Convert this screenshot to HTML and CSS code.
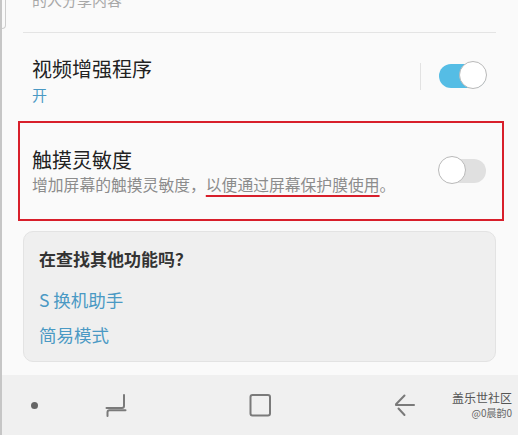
FILE: index.html
```html
<!DOCTYPE html>
<html lang="zh-CN">
<head>
    <meta charset="UTF-8">
    <meta name="viewport" content="width=device-width, initial-scale=1.0">
    <title>高级功能</title>
    <link rel="stylesheet" href="styles.css">
</head>
<body>
    <div class="screen">
        <div class="edge-tab"></div>

        <div class="content">
            <div class="top-item">
                <p class="top-text">的人分享内容</p>
            </div>

            <div class="row video-row">
                <div class="row-text">
                    <div class="row-title">视频增强程序</div>
                    <div class="row-state">开</div>
                </div>
                <div class="row-switch">
                    <span class="vdivider"></span>
                    <span class="toggle on"><span class="thumb"></span></span>
                </div>
            </div>

            <div class="row touch-row">
                <div class="row-text">
                    <div class="row-title">触摸灵敏度</div>
                    <div class="row-sub">增加屏幕的触摸灵敏度，<span class="mark">以便通过屏幕保护膜使用</span>。</div>
                </div>
                <span class="toggle off"><span class="thumb"></span></span>
            </div>

            <div class="card">
                <div class="card-title">在查找其他功能吗？</div>
                <a class="card-link">S 换机助手</a>
                <a class="card-link">简易模式</a>
            </div>
        </div>

        <div class="navbar">
            <span class="nav-dot"></span>
            <svg class="nav-recents" width="22" height="24" viewBox="0 0 22 24">
                <path d="M19 2 V13 Q19 15 17 15 H1.5" />
                <path d="M20.5 17.2 H4.5 Q2.5 17.2 2.5 19.2 V23" />
            </svg>
            <svg class="nav-home" width="24" height="24" viewBox="0 0 24 24">
                <rect x="2.5" y="2" width="19.5" height="20.5" rx="2" />
            </svg>
            <svg class="nav-back" width="22" height="24" viewBox="0 0 22 24">
                <path d="M2 12 H20" />
                <path d="M2 11.3 L10.5 2.5" />
                <path d="M4.5 15.5 L10.5 22" />
            </svg>
            <div class="watermark">
                <div class="wm-site">盖乐世社区</div>
                <div class="wm-user">@0晨韵0</div>
            </div>
        </div>
    </div>
</body>
</html>
```

FILE: styles.css
```css
body {
    margin: 0;
    background: #fafafa;
    font-family: "Noto Sans CJK SC", "Noto Sans", sans-serif;
}
.screen {
    position: relative;
    width: 516px;
    height: 435px;
    border-left: 2px solid #c6c6c6;
    display: flex;
    flex-direction: column;
    overflow: hidden;
}
.edge-tab {
    position: absolute;
    left: -2px;
    top: -4px;
    width: 5px;
    height: 31px;
    border: 1px solid #cdcdcd;
    border-left: none;
    border-radius: 0 4px 4px 0;
}
.content {
    flex: 1;
    overflow: hidden;
}
.top-item {
    display: flow-root;
    height: 32px;
    margin: 0 22px 0 21px;
    padding-left: 9px;
    border-bottom: 1px solid #e4e4e4;
}
.top-text {
    margin: -10px 0 0;
    font-size: 15px;
    line-height: 20px;
    color: #a8a8a8;
}
.row {
    display: flex;
    align-items: center;
    justify-content: space-between;
}
.row-title {
    font-size: 20px;
    line-height: 28px;
    color: #222;
}
.video-row {
    height: 88px;
    padding: 0 32px 0 30px;
    box-sizing: border-box;
}
.video-row .row-text {
    margin-top: 5px;
}
.row-state {
    margin-top: 2px;
    font-size: 15px;
    line-height: 20px;
    color: #4a99c4;
}
.row-switch {
    display: flex;
    align-items: center;
    gap: 18px;
    margin-bottom: 2px;
}
.vdivider {
    width: 1px;
    height: 27px;
    background: #e2e2e2;
}
.touch-row {
    height: 100px;
    margin: 0 14px 0 16px;
    padding: 0 16px 0 12px;
    box-sizing: border-box;
    border: 2px solid #d81f2b;
}
.row-sub {
    font-size: 15.8px;
    line-height: 22px;
    color: #8c8c8c;
    white-space: nowrap;
}
.mark {
    text-decoration: underline;
    text-decoration-color: #d81f2b;
    text-decoration-thickness: 2px;
    text-underline-offset: 4px;
}
.toggle {
    position: relative;
    display: block;
    width: 47px;
    height: 24px;
    border-radius: 12px;
    flex-shrink: 0;
}
.toggle.on {
    background: #55bde5;
}
.toggle.off {
    background: #e0e0e0;
}
.thumb {
    position: absolute;
    top: -3px;
    width: 26px;
    height: 26px;
    border-radius: 50%;
    background: #fff;
    border: 1px solid #b9b9b9;
}
.toggle.on .thumb {
    right: -1px;
}
.toggle.off .thumb {
    left: -1px;
}
.card {
    margin: 10px 22px 0 21px;
    height: 131px;
    box-sizing: border-box;
    padding: 15px 16px 8px 15px;
    background: #efefef;
    border: 1px solid #e3e3e3;
    border-radius: 10px;
}
.card-title {
    font-size: 17px;
    font-weight: bold;
    line-height: 24px;
    color: #333;
    margin-bottom: 11px;
}
.card-link {
    display: block;
    font-size: 17.5px;
    line-height: 35px;
    color: #4a99c4;
}
.navbar {
    position: relative;
    height: 60px;
    flex-shrink: 0;
    background: #f0f0f0;
    display: flex;
    align-items: center;
    padding-left: 29px;
}
.navbar svg {
    fill: none;
    stroke: #7a7a7a;
    stroke-width: 2;
    stroke-linecap: round;
}
.nav-dot {
    width: 7px;
    height: 7px;
    border-radius: 50%;
    background: #666;
}
.nav-recents {
    margin-left: 67px;
}
.nav-home {
    margin-left: 121px;
}
.nav-back {
    margin-left: 122px;
}
.watermark {
    position: absolute;
    right: 6px;
    top: 15px;
    text-align: right;
    color: #555;
}
.wm-site {
    font-size: 12px;
    line-height: 16px;
}
.wm-user {
    font-size: 10px;
    line-height: 14px;
    color: #666;
}
```
